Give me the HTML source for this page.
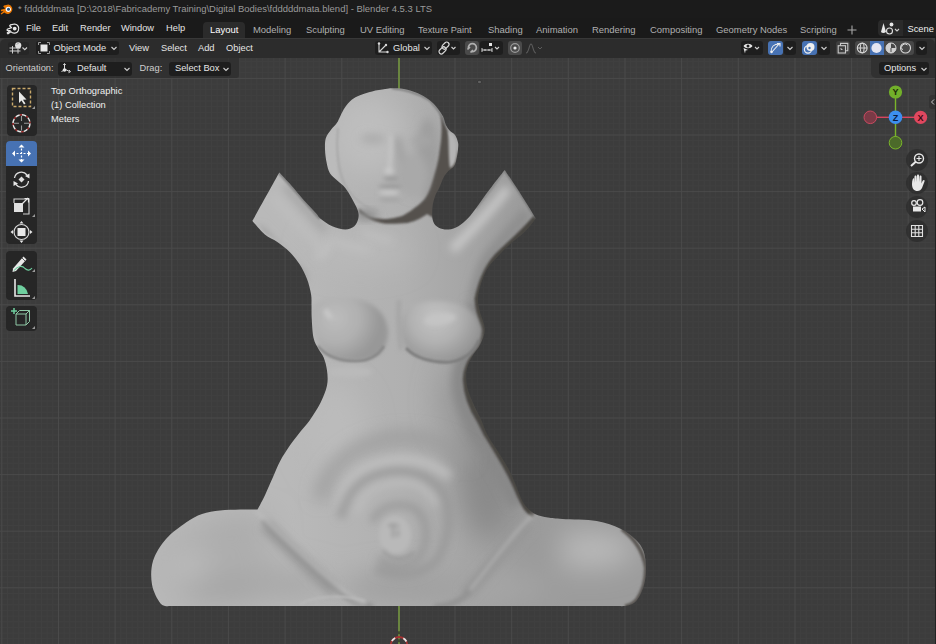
<!DOCTYPE html>
<html><head><meta charset="utf-8">
<style>
*{margin:0;padding:0;box-sizing:border-box}
html,body{width:936px;height:644px;overflow:hidden;background:#3d3d3d;font-family:"Liberation Sans",sans-serif;color:#e6e6e6}
.a{position:absolute;white-space:nowrap}
#title{left:0;top:0;width:936px;height:18px;background:#1b1b1b}
#menubar{left:0;top:18px;width:936px;height:20px;background:#1a1a1a}
.t{position:absolute;white-space:nowrap;font-size:9.3px;line-height:12px}
#hdr{left:0;top:38px;width:935px;height:20px;background:#2c2c2c;border-radius:6px 6px 0 0;border-top:1px solid #383838}
#tool{left:0;top:58px;width:238.5px;height:20px;background:rgba(46,46,46,0.75);border-radius:0 0 3px 0}
#tool2{left:871px;top:58px;width:64px;height:20px;background:rgba(46,46,46,0.75);border-radius:0 0 0 5px}
.dd{position:absolute;background:#1e1e1e;border-radius:3px}
.tb{position:absolute;background:#262626;border-radius:4px}
.nb{position:absolute;width:22px;height:22px;border-radius:11px;background:rgba(38,38,38,0.6)}
</style></head><body>
<svg class="a" style="left:0;top:0" width="936" height="644" viewBox="0 0 936 644">
  <defs>
    <mask id="msk" maskUnits="userSpaceOnUse" x="0" y="0" width="936" height="644"><path d="M392.0 88.3 C395.1 88.3 399.7 88.3 404.0 89.1 C408.3 89.9 413.7 91.5 417.9 93.3 C422.1 95.1 425.8 97.3 429.1 99.8 C432.4 102.3 435.2 105.4 437.5 108.2 C439.8 111.0 441.7 113.8 443.1 116.6 C444.5 119.4 444.8 122.7 445.9 125.0 C447.0 127.3 448.1 128.9 449.6 130.6 C451.2 132.3 453.8 133.2 455.2 135.2 C456.6 137.2 457.5 140.4 458.0 142.5 C458.5 144.6 458.3 145.5 458.1 148.0 C457.9 150.5 457.4 154.7 456.8 157.7 C456.2 160.7 455.7 163.7 454.3 165.9 C452.9 168.1 450.4 168.9 448.6 170.8 C446.8 172.7 445.2 174.6 443.7 177.3 C442.2 180.0 441.1 183.8 439.6 187.1 C438.1 190.4 436.0 193.4 434.8 196.9 C433.6 200.4 432.6 204.2 432.3 208.3 C432.0 212.4 432.0 218.1 433.1 221.3 C434.2 224.6 436.2 226.4 438.8 227.8 C441.4 229.2 445.3 229.8 448.6 229.5 C451.9 229.2 455.1 228.1 458.4 226.2 C461.7 224.3 465.3 221.0 468.2 218.0 C471.1 215.0 473.4 211.8 476.0 208.3 C478.6 204.8 481.3 200.7 484.0 197.0 C486.7 193.3 488.9 190.5 492.3 186.0 C495.8 181.5 504.7 170.0 504.7 170.0 C504.7 170.0 514.4 184.2 519.6 192.3 C524.8 200.4 535.8 218.4 535.8 218.4 C535.8 218.4 529.0 227.7 524.6 232.0 C520.2 236.3 514.2 240.3 509.7 244.5 C505.1 248.7 501.0 252.9 497.3 257.0 C493.6 261.1 490.0 264.5 487.3 269.0 C484.6 273.5 482.6 279.0 481.0 284.0 C479.4 289.0 478.2 294.5 478.0 299.0 C477.8 303.5 478.7 306.0 479.8 311.0 C480.9 316.0 484.7 323.4 484.8 329.0 C484.9 334.6 482.6 339.6 480.4 344.3 C478.2 349.0 474.0 352.8 471.7 357.4 C469.4 362.0 467.0 366.9 466.3 372.0 C465.6 377.1 466.1 382.3 467.4 387.8 C468.7 393.3 471.6 399.8 474.0 405.2 C476.4 410.6 479.3 415.6 481.5 420.4 C483.7 425.2 484.4 429.1 487.0 434.0 C489.6 438.9 493.5 444.3 497.0 450.0 C500.5 455.7 505.0 462.5 508.0 468.0 C511.0 473.5 512.8 477.8 515.0 483.0 C517.2 488.2 519.5 494.9 521.5 499.0 C523.5 503.1 524.6 504.9 527.0 507.5 C529.4 510.1 532.5 512.8 536.0 514.5 C539.5 516.2 543.6 516.8 548.0 517.5 C552.4 518.2 554.5 518.4 562.6 519.0 C570.7 519.6 587.1 519.4 596.7 521.0 C606.3 522.6 613.6 525.5 620.0 528.5 C626.4 531.5 631.1 535.2 635.0 539.0 C638.9 542.8 641.7 546.2 643.5 551.0 C645.3 555.8 645.9 562.3 646.0 568.0 C646.1 573.7 645.5 579.7 644.0 585.0 C642.5 590.3 639.7 596.6 637.0 600.0 C634.3 603.4 631.2 604.5 628.0 605.5 C624.8 606.5 618.0 606.0 618.0 606.0 C618.0 606.0 170.0 606.0 170.0 606.0 C170.0 606.0 163.5 607.0 160.5 603.4 C157.5 599.8 153.2 591.7 152.0 584.6 C150.8 577.5 150.7 568.6 153.0 561.0 C155.3 553.4 160.5 545.4 166.0 539.0 C171.5 532.6 180.0 526.7 186.0 522.5 C192.0 518.3 196.3 516.0 202.0 514.0 C207.7 512.0 213.7 511.3 220.0 510.6 C226.3 509.9 233.8 509.8 240.0 509.6 C246.2 509.4 257.5 509.5 257.5 509.5 C257.5 509.5 259.2 506.5 260.5 504.0 C261.8 501.5 263.3 499.0 265.3 494.6 C267.3 490.2 270.2 483.4 272.7 477.8 C275.2 472.2 277.4 466.3 280.2 461.0 C283.0 455.7 286.1 451.0 289.5 446.0 C292.9 441.0 297.3 435.5 300.7 431.2 C304.1 426.9 306.3 425.1 309.6 420.4 C312.9 415.7 317.5 408.8 320.4 403.0 C323.3 397.2 325.9 391.0 327.0 385.6 C328.1 380.2 327.6 375.1 327.0 370.4 C326.4 365.7 325.1 361.0 323.7 357.4 C322.2 353.8 320.0 352.0 318.3 348.7 C316.6 345.4 314.6 342.9 313.5 337.8 C312.4 332.7 312.0 323.5 311.7 318.0 C311.4 312.5 311.6 309.0 311.5 305.0 C311.4 301.0 311.8 298.3 311.0 294.0 C310.2 289.7 308.9 283.9 307.0 279.0 C305.1 274.1 302.5 268.8 299.6 264.3 C296.7 259.8 293.4 255.7 289.7 252.0 C286.0 248.3 281.4 244.9 277.3 242.0 C273.2 239.1 268.9 238.0 264.8 234.5 C260.7 231.0 252.4 220.9 252.4 220.9 C252.4 220.9 279.3 172.4 279.3 172.4 C279.3 172.4 285.5 178.8 289.7 183.6 C293.9 188.4 300.2 196.1 304.6 201.0 C309.0 205.9 313.3 210.2 316.0 213.2 C318.7 216.2 318.2 216.7 320.9 218.9 C323.6 221.1 328.2 224.4 332.3 226.2 C336.4 228.0 341.6 229.5 345.3 229.5 C349.0 229.5 352.1 228.1 354.3 226.2 C356.5 224.3 357.8 220.7 358.4 218.0 C358.9 215.3 358.7 213.2 357.6 209.9 C356.5 206.7 353.9 202.2 351.9 198.5 C349.8 194.8 347.8 190.9 345.3 187.9 C342.9 184.9 339.8 182.9 337.2 180.5 C334.6 178.1 331.7 176.2 329.9 173.2 C328.1 170.2 327.4 166.5 326.6 162.6 C325.8 158.7 325.1 153.7 325.0 149.6 C324.9 145.5 324.8 141.5 325.8 138.2 C326.8 134.9 329.4 132.1 331.2 129.6 C333.0 127.1 335.2 125.4 336.8 123.1 C338.4 120.8 339.1 118.3 340.5 115.7 C341.9 113.1 343.2 110.0 345.1 107.3 C347.0 104.6 349.2 101.8 351.7 99.8 C354.2 97.8 356.6 96.6 360.0 95.2 C363.4 93.8 367.9 92.4 372.1 91.4 C376.3 90.4 381.9 89.6 385.2 89.1 C388.5 88.6 388.9 88.3 392.0 88.3Z" fill="#fff"/></mask>
    <filter id="b1" x="-50%" y="-50%" width="200%" height="200%"><feGaussianBlur stdDeviation="1"/></filter>
    <filter id="b2" x="-50%" y="-50%" width="200%" height="200%"><feGaussianBlur stdDeviation="2"/></filter>
    <filter id="b4" x="-50%" y="-50%" width="200%" height="200%"><feGaussianBlur stdDeviation="4"/></filter>
    <filter id="b8" x="-50%" y="-50%" width="200%" height="200%"><feGaussianBlur stdDeviation="8"/></filter>
    <filter id="b14" x="-50%" y="-50%" width="200%" height="200%"><feGaussianBlur stdDeviation="14"/></filter>
  </defs>
  <rect width="936" height="644" fill="#3c3c3c"/>
  <g stroke="#4a4a4a" stroke-width="1">
<path d="M7.5 58V644 M13.2 58V644 M18.8 58V644 M24.5 58V644 M30.2 58V644 M35.8 58V644 M41.5 58V644 M47.2 58V644 M52.8 58V644 M64.2 58V644 M69.8 58V644 M75.5 58V644 M81.2 58V644 M86.8 58V644 M92.5 58V644 M98.2 58V644 M103.8 58V644 M109.5 58V644 M120.8 58V644 M126.5 58V644 M132.1 58V644 M137.8 58V644 M143.5 58V644 M149.1 58V644 M154.8 58V644 M160.5 58V644 M166.1 58V644 M177.5 58V644 M183.1 58V644 M188.8 58V644 M194.5 58V644 M200.1 58V644 M205.8 58V644 M211.5 58V644 M217.1 58V644 M222.8 58V644 M234.1 58V644 M239.8 58V644 M245.4 58V644 M251.1 58V644 M256.8 58V644 M262.4 58V644 M268.1 58V644 M273.8 58V644 M279.4 58V644 M290.8 58V644 M296.4 58V644 M302.1 58V644 M307.8 58V644 M313.4 58V644 M319.1 58V644 M324.8 58V644 M330.4 58V644 M336.1 58V644 M347.4 58V644 M353.1 58V644 M358.7 58V644 M364.4 58V644 M370.1 58V644 M375.7 58V644 M381.4 58V644 M387.1 58V644 M392.7 58V644 M404.1 58V644 M409.7 58V644 M415.4 58V644 M421.1 58V644 M426.7 58V644 M432.4 58V644 M438.1 58V644 M443.7 58V644 M449.4 58V644 M460.7 58V644 M466.4 58V644 M472.0 58V644 M477.7 58V644 M483.4 58V644 M489.0 58V644 M494.7 58V644 M500.4 58V644 M506.0 58V644 M517.4 58V644 M523.0 58V644 M528.7 58V644 M534.4 58V644 M540.0 58V644 M545.7 58V644 M551.4 58V644 M557.0 58V644 M562.7 58V644 M574.0 58V644 M579.7 58V644 M585.3 58V644 M591.0 58V644 M596.7 58V644 M602.3 58V644 M608.0 58V644 M613.7 58V644 M619.3 58V644 M630.7 58V644 M636.3 58V644 M642.0 58V644 M647.7 58V644 M653.3 58V644 M659.0 58V644 M664.7 58V644 M670.3 58V644 M676.0 58V644 M687.3 58V644 M693.0 58V644 M698.6 58V644 M704.3 58V644 M710.0 58V644 M715.6 58V644 M721.3 58V644 M727.0 58V644 M732.6 58V644 M744.0 58V644 M749.6 58V644 M755.3 58V644 M761.0 58V644 M766.6 58V644 M772.3 58V644 M778.0 58V644 M783.6 58V644 M789.3 58V644 M800.6 58V644 M806.3 58V644 M811.9 58V644 M817.6 58V644 M823.3 58V644 M828.9 58V644 M834.6 58V644 M840.3 58V644 M845.9 58V644 M857.3 58V644 M862.9 58V644 M868.6 58V644 M874.3 58V644 M879.9 58V644 M885.6 58V644 M891.3 58V644 M896.9 58V644 M902.6 58V644 M913.9 58V644 M919.6 58V644 M925.2 58V644 M930.9 58V644 M0 61.4H936 M0 67.1H936 M0 72.7H936 M0 84.1H936 M0 89.7H936 M0 95.4H936 M0 101.0H936 M0 106.7H936 M0 112.4H936 M0 118.0H936 M0 123.7H936 M0 129.3H936 M0 140.7H936 M0 146.3H936 M0 152.0H936 M0 157.6H936 M0 163.3H936 M0 169.0H936 M0 174.6H936 M0 180.3H936 M0 185.9H936 M0 197.3H936 M0 202.9H936 M0 208.6H936 M0 214.2H936 M0 219.9H936 M0 225.6H936 M0 231.2H936 M0 236.9H936 M0 242.5H936 M0 253.9H936 M0 259.5H936 M0 265.2H936 M0 270.8H936 M0 276.5H936 M0 282.2H936 M0 287.8H936 M0 293.5H936 M0 299.1H936 M0 310.5H936 M0 316.1H936 M0 321.8H936 M0 327.4H936 M0 333.1H936 M0 338.8H936 M0 344.4H936 M0 350.1H936 M0 355.7H936 M0 367.1H936 M0 372.7H936 M0 378.4H936 M0 384.0H936 M0 389.7H936 M0 395.4H936 M0 401.0H936 M0 406.7H936 M0 412.3H936 M0 423.7H936 M0 429.3H936 M0 435.0H936 M0 440.6H936 M0 446.3H936 M0 452.0H936 M0 457.6H936 M0 463.3H936 M0 468.9H936 M0 480.3H936 M0 485.9H936 M0 491.6H936 M0 497.2H936 M0 502.9H936 M0 508.6H936 M0 514.2H936 M0 519.9H936 M0 525.5H936 M0 536.9H936 M0 542.5H936 M0 548.2H936 M0 553.8H936 M0 559.5H936 M0 565.2H936 M0 570.8H936 M0 576.5H936 M0 582.1H936 M0 593.5H936 M0 599.1H936 M0 604.8H936 M0 610.4H936 M0 616.1H936 M0 621.8H936 M0 627.4H936 M0 633.1H936 M0 638.7H936" stroke="#404040" stroke-width="1" fill="none"/>
<line x1="1.8" y1="58" x2="1.8" y2="644"/>
<line x1="58.5" y1="58" x2="58.5" y2="644"/>
<line x1="115.1" y1="58" x2="115.1" y2="644"/>
<line x1="171.8" y1="58" x2="171.8" y2="644"/>
<line x1="228.4" y1="58" x2="228.4" y2="644"/>
<line x1="285.1" y1="58" x2="285.1" y2="644"/>
<line x1="341.8" y1="58" x2="341.8" y2="644"/>
<line x1="455.0" y1="58" x2="455.0" y2="644"/>
<line x1="511.7" y1="58" x2="511.7" y2="644"/>
<line x1="568.3" y1="58" x2="568.3" y2="644"/>
<line x1="625.0" y1="58" x2="625.0" y2="644"/>
<line x1="681.6" y1="58" x2="681.6" y2="644"/>
<line x1="738.3" y1="58" x2="738.3" y2="644"/>
<line x1="795.0" y1="58" x2="795.0" y2="644"/>
<line x1="851.6" y1="58" x2="851.6" y2="644"/>
<line x1="908.2" y1="58" x2="908.2" y2="644"/>
<line x1="0" y1="78.4" x2="936" y2="78.4"/>
<line x1="0" y1="135.0" x2="936" y2="135.0"/>
<line x1="0" y1="191.6" x2="936" y2="191.6"/>
<line x1="0" y1="248.2" x2="936" y2="248.2"/>
<line x1="0" y1="304.8" x2="936" y2="304.8"/>
<line x1="0" y1="361.4" x2="936" y2="361.4"/>
<line x1="0" y1="418.0" x2="936" y2="418.0"/>
<line x1="0" y1="474.6" x2="936" y2="474.6"/>
<line x1="0" y1="531.2" x2="936" y2="531.2"/>
<line x1="0" y1="587.8" x2="936" y2="587.8"/>
<line x1="0" y1="644.4" x2="936" y2="644.4"/>
  </g>
  <line x1="399" y1="58" x2="399" y2="644" stroke="#6a8540" stroke-width="2"/>
  <g mask="url(#msk)">
  <rect x="140" y="80" width="520" height="540" fill="#afafaf"/>
<defs>
  <linearGradient id="gbase" gradientUnits="userSpaceOnUse" x1="290" y1="0" x2="520" y2="0">
    <stop offset="0" stop-color="#b9b9b9"/>
    <stop offset="0.5" stop-color="#b0b0b0"/>
    <stop offset="1" stop-color="#9c9c9c"/>
  </linearGradient>
</defs>
<rect x="140" y="80" width="520" height="540" fill="url(#gbase)"/>
<!-- broad light/dark -->
<g filter="url(#b14)">
  <ellipse cx="368" cy="135" rx="38" ry="40" fill="#bebebe"/>
  <ellipse cx="215" cy="565" rx="60" ry="40" fill="#aeaeae"/>
  <ellipse cx="188" cy="568" rx="22" ry="18" fill="#bcbcbc"/>
  <ellipse cx="230" cy="590" rx="50" ry="14" fill="#a4a4a4"/>
  <ellipse cx="240" cy="525" rx="35" ry="10" fill="#aaaaaa"/>
  <ellipse cx="590" cy="550" rx="45" ry="18" fill="#bababa"/>
  <ellipse cx="545" cy="545" rx="18" ry="30" fill="#9a9a9a"/>
  <ellipse cx="360" cy="250" rx="50" ry="18" fill="#b9b9b9"/>
  <ellipse cx="335" cy="430" rx="30" ry="45" fill="#bbbbbb"/>
  <ellipse cx="488" cy="470" rx="30" ry="70" fill="#8a8a8a"/>
  <ellipse cx="455" cy="400" rx="15" ry="35" fill="#9a9a9a"/>
  <ellipse cx="405" cy="588" rx="65" ry="16" fill="#9f9f9f"/>
  <ellipse cx="290" cy="585" rx="40" ry="16" fill="#a8a8a8"/>
  <ellipse cx="505" cy="588" rx="40" ry="14" fill="#a6a6a6"/>
</g>
<!-- head right -->
<g filter="url(#b4)">
  <ellipse cx="428" cy="160" rx="11" ry="42" fill="#9e9e9e"/>
</g>
<g filter="url(#b1)">
  <path d="M438 108 C443 118 442 135 439.7 150 C438.5 160 437.6 164 433.4 178 C431 186 428 196 423 200.8 C419 205 416 207 412.5 209.4 C406 214 402 216.5 398 217 C392 218.5 388 219 383.7 219 C378 218.5 373 217.5 369.2 216 C365 213 361 210 358.7 208.5 L359.6 213.3 C364 216 369 219 374 221 C380 223 385 223.8 390.4 223.8 C397 223.8 402 223.3 407.7 222.9 C412 222 416 220.5 419 219 C423 217 425 215.5 427 214 L440 222 L460 160 Z" fill="#55514d"/>
</g>
<g filter="url(#b4)">
  <ellipse cx="366" cy="215" rx="12" ry="5" fill="#8a8a8a"/>
</g>
<g filter="url(#b4)" fill="none">
  <path d="M318 258 C322 252 326 248 330 244" stroke="#c4c4c4" stroke-width="6"/>
  <path d="M362 232 C372 236 382 239 392 240" stroke="#c4c4c4" stroke-width="4"/>
</g>
<g filter="url(#b1)" fill="none">
  <path d="M392 88.3 C404 89.1 417.9 93.3 429.1 99.8 C437.5 108.2 443.1 116.6 445.9 125" stroke="#6c6c6c" stroke-width="1.6"/>
</g>
<g filter="url(#b1)">
  <path d="M448 131 C455 134 458 145 457 155 C456 162 454 166 450 168 C448.5 160 449 145 448 131 Z" fill="#b4b4b4"/>
  <path d="M336 128 C329 133 325.5 145 326 158 C327 168 330 175 338 180 C337 165 335 145 336 128 Z" fill="#bbbbbb"/>
</g>
<g filter="url(#b1)" fill="none">
  <path d="M338 128 C336 150 338 170 345 185 C352 198 365 208 378 211" stroke="#a4a4a4" stroke-width="1.5"/>
</g>
<!-- face features -->
<g filter="url(#b4)">
  <ellipse cx="373" cy="139" rx="13" ry="5" fill="#acacac"/>
  <ellipse cx="422" cy="141" rx="12" ry="5" fill="#a6a6a6"/>
  <path d="M397 137 C401 150 402 163 399 176" stroke="#9c9c9c" stroke-width="7" fill="none"/>
  <ellipse cx="412" cy="175" rx="16" ry="22" fill="#a9a9a9"/>
</g>
<g filter="url(#b2)">
  <path d="M391 135 C391 150 390 162 389 170" stroke="#c6c6c6" stroke-width="3.5" fill="none"/>
  <ellipse cx="389" cy="171" rx="4.5" ry="3.5" fill="#c8c8c8"/>
  <ellipse cx="391" cy="178.5" rx="8" ry="2.2" fill="#979797"/>
  <ellipse cx="390" cy="186.5" rx="12" ry="1.8" fill="#939393"/>
  <ellipse cx="389" cy="192.5" rx="10" ry="2.6" fill="#c8c8c8"/>
  <ellipse cx="390" cy="199.5" rx="11" ry="2.3" fill="#a4a4a4"/>
</g>
<!-- left arm -->
<g filter="url(#b4)" fill="none">
  <path d="M272 196 L325 252" stroke="#bdbdbd" stroke-width="9"/>
  <path d="M285 186 L325 230" stroke="#a2a2a2" stroke-width="6"/>
  <path d="M258 229 L305 280" stroke="#9a9a9a" stroke-width="8"/>
</g>
<g filter="url(#b1)" fill="none">
  <path d="M279.3 172.4 L304.6 201 L320 218.4" stroke="#7c7c7c" stroke-width="3"/>
  <path d="M252.4 220.9 L264.8 234.5 L277.3 242 L289.7 252 L299.6 264.3" stroke="#b8b8b8" stroke-width="3"/>
</g>
<!-- right arm -->
<g filter="url(#b4)" fill="none">
  <path d="M528 212 C514 228 500 242 489 257 C482 267 478 280 474 300" stroke="#8e8e8e" stroke-width="12"/>
  <path d="M452 250 C470 232 490 212 508 188" stroke="#c8c8c8" stroke-width="9"/>
  <path d="M330 238 C340 245 355 248 370 250" stroke="#c2c2c2" stroke-width="4"/>
</g>
<g filter="url(#b4)" fill="none">
  <path d="M474 300 C478 320 480 335 470 350 C462 362 458 372 460 390 C462 405 470 420 480 436 C492 455 505 480 518 505" stroke="#888888" stroke-width="16"/>
</g>
<g filter="url(#b1)" fill="none">
  <path d="M537 217 C525 232 508 246 497 257 C487 268 481 284 478 299 C479 315 484 325 484.8 329 C484 338 481 344 478 350 C472 360 466 368 466.3 380 C467 395 472 408 480 420 C484 428 486 432 487 434 C497 450 508 468 515 483 C519 492 522 500 527 508 C530 512 532 513 534 514" stroke="#4a4643" stroke-width="7"/>
  <path d="M504.7 170 L519.6 192.3 L535.8 218.4" stroke="#6a6a6a" stroke-width="1.8"/>
  <path d="M504.7 170 L492.3 187.3 L476 208.3" stroke="#808080" stroke-width="1.8"/>
</g>
<!-- chest -->
<defs>
  <radialGradient id="gbl" gradientUnits="userSpaceOnUse" cx="335" cy="318" r="45">
    <stop offset="0" stop-color="#bcbcbc"/>
    <stop offset="0.55" stop-color="#b0b0b0"/>
    <stop offset="1" stop-color="#989898"/>
  </radialGradient>
  <radialGradient id="gbr" gradientUnits="userSpaceOnUse" cx="435" cy="318" r="48">
    <stop offset="0" stop-color="#c2c2c2"/>
    <stop offset="0.5" stop-color="#b2b2b2"/>
    <stop offset="1" stop-color="#929292"/>
  </radialGradient>
</defs>
<g filter="url(#b2)">
  <path d="M311.6 309.8 C314 300 330 296 350 298 C372 300 386 312 388 330 C389 345 380 356 371 358 C358 362 340 362 330 356 C318 348 310 330 311.6 309.8 Z" fill="url(#gbl)"/>
  <path d="M401.6 323 C402 308 418 300 438 301 C462 302 478 312 481 329.6 C483 345 472 358 452 361 C432 363 412 356 405 345 C402 338 401 330 401.6 323 Z" fill="url(#gbr)"/>
</g>
<g filter="url(#b1)" fill="none">
  <path d="M318 346 C326 356 340 361 355 361 C368 361 378 356 384 346" stroke="#858585" stroke-width="2.5"/>
  <path d="M406 348 C415 358 432 363 450 362 C465 360 474 352 479 340" stroke="#7c7c7c" stroke-width="3"/>
</g>
<g filter="url(#b2)">
  <path d="M399 300 C398 318 399 335 401 350" stroke="#a0a0a0" stroke-width="3" fill="none"/>
  <ellipse cx="328" cy="314" rx="6" ry="2.5" fill="#cacaca" transform="rotate(55 328 314)"/>
  <ellipse cx="440" cy="319" rx="16" ry="6" fill="#c4c4c4" transform="rotate(-8 440 319)"/>
  <ellipse cx="350" cy="372" rx="22" ry="6" fill="#bababa"/>
</g>
<!-- belly spiral -->
<g filter="url(#b8)" fill="none">
  <path d="M320 500 C326 468 350 446 390 438 C420 434 450 442 470 462" stroke="#9a9a9a" stroke-width="11"/>
</g>
<g filter="url(#b4)" fill="none">
  <path d="M340 508 C342 482 360 465 395 460 C418 458 436 465 450 477" stroke="#c0c0c0" stroke-width="8"/>
  <path d="M341 518 C345 492 360 475 390 471 C415 469 432 478 443 493 C452 510 450 540 437 560 C422 576 396 579 375 569" stroke="#979797" stroke-width="7"/>
  <path d="M357 512 C362 492 378 483 402 482 C420 482 430 491 436 506" stroke="#bebebe" stroke-width="6"/>
  <path d="M372 522 C378 507 395 502 412 507 C428 515 430 540 420 556 C410 568 390 568 378 558" stroke="#939393" stroke-width="5"/>
</g>
<g filter="url(#b2)">
  <ellipse cx="395" cy="535" rx="16" ry="19" fill="#b9b9b9"/>
  <path d="M383 550 C390 560 405 562 414 552" stroke="#969696" stroke-width="3" fill="none"/>
  <path d="M388 526 C392 524 396 524 399 527 M393 526 V538 M398 530 V537" stroke="#909090" stroke-width="2" fill="none"/>
</g>
<!-- leg creases -->
<g filter="url(#b4)" fill="none">
  <path d="M265 525 C285 545 310 570 335 592" stroke="#979797" stroke-width="12"/>
  <path d="M528 525 C510 545 488 570 465 595" stroke="#979797" stroke-width="12"/>
</g>
<g filter="url(#b2)" fill="none">
  <path d="M263 520 C286 542 316 572 341 592 C351 601 361 605 373 607" stroke="#939393" stroke-width="6"/>
  <path d="M528 521 C509 537 484 572 464 597 C454 604 444 607 434 607" stroke="#939393" stroke-width="6"/>
  <path d="M256 511 C279 533 309 563 334 583 C344 593 354 600 366 604" stroke="#bdbdbd" stroke-width="2.5"/>
  <path d="M534 514 C515 530 490 565 470 590" stroke="#b6b6b6" stroke-width="2.5"/>
</g>
<g filter="url(#b1)" fill="none">
  <path d="M300 604 C315 596 345 594 365 601" stroke="#bababa" stroke-width="2"/>
  <path d="M622 529 C635 539 643.5 551 646 568 C646 580 644 590 637 600 C633 604 630 606 625 606.5" stroke="#5a5652" stroke-width="4"/>
</g>

  </g>
  <ellipse cx="479.5" cy="82" rx="2.2" ry="1.6" fill="#606060" stroke="#333" stroke-width="0.8"/>
  <!-- 3d cursor -->
  <g transform="translate(399,645.3)">
    <circle r="8.3" fill="none" stroke="#a83232" stroke-width="1.8"/>
    <circle r="8.3" fill="none" stroke="#e8e8e8" stroke-width="1.8" stroke-dasharray="4.5 8.54" stroke-dashoffset="8.77"/>
    <path d="M0 -14 V-11 M0 -6 V-3" stroke="#222" stroke-width="1.2"/>
  </g>
</svg>

<div id="title" class="a"></div>
<div id="menubar" class="a"></div>
<div id="hdr" class="a"></div>
<div id="tool" class="a"></div>
<div id="tool2" class="a"></div>

<!-- title bar -->
<svg class="a" style="left:0;top:3px" width="15" height="13" viewBox="0 0 15 13">
  <path d="M8.3 1.6 A4.7 4.7 0 1 1 4.3 9.6 L1.4 11.6 L0.6 10.6 L3.6 8.2 L0.9 8.2 L0.9 6.8 L5.4 5.4 L3.2 3.6 L4 2.6 Z" fill="#ea7600"/>
  <circle cx="8.3" cy="6.3" r="2.6" fill="#ffffff"/>
  <circle cx="8.5" cy="6.3" r="1.5" fill="#265787"/>
</svg>
<div class="t" style="left:18px;top:3px;font-size:9.47px;color:#9a9a9a">* fdddddmata [D:\2018\Fabricademy Training\Digital Bodies\fdddddmata.blend] - Blender 4.5.3 LTS</div>

<!-- menubar -->
<svg class="a" style="left:5px;top:22px" width="16" height="14" viewBox="0 0 16 14">
  <path d="M9.7 2 A4.6 4.6 0 1 1 5.8 9.7 L3 11.8 L2.2 10.9 L5.1 8.5 L2.2 8.5 L2.2 7.2 L6.6 5.6 L4.6 3.8 L5.4 2.9 Z" fill="none" stroke="#e8e8e8" stroke-width="1.2" stroke-linejoin="round"/>
  <circle cx="9.7" cy="6.6" r="1.9" fill="#e8e8e8"/>
</svg>
<div class="t" style="left:26px;top:22px">File</div>
<div class="t" style="left:52px;top:22px">Edit</div>
<div class="t" style="left:80px;top:22px">Render</div>
<div class="t" style="left:121px;top:22px">Window</div>
<div class="t" style="left:166px;top:22px">Help</div>

<div class="a" style="left:203px;top:22px;width:42px;height:16px;background:#2b2b2b;border-radius:4px 4px 0 0"></div>
<div class="t" style="left:210px;top:24px;font-size:9.45px;color:#ffffff">Layout</div>
<div class="t" style="left:253px;top:24px;font-size:9.45px;color:#b0b0b0">Modeling</div>
<div class="t" style="left:306px;top:24px;font-size:9.45px;color:#b0b0b0">Sculpting</div>
<div class="t" style="left:360px;top:24px;font-size:9.45px;color:#b0b0b0">UV Editing</div>
<div class="t" style="left:418px;top:24px;font-size:9.2px;color:#b0b0b0">Texture Paint</div>
<div class="t" style="left:488px;top:24px;font-size:9.45px;color:#b0b0b0">Shading</div>
<div class="t" style="left:536px;top:24px;font-size:9.45px;color:#b0b0b0">Animation</div>
<div class="t" style="left:592px;top:24px;font-size:9.45px;color:#b0b0b0">Rendering</div>
<div class="t" style="left:650px;top:24px;font-size:9.45px;color:#b0b0b0">Compositing</div>
<div class="t" style="left:716px;top:24px;font-size:9.45px;color:#b0b0b0">Geometry Nodes</div>
<div class="t" style="left:800px;top:24px;font-size:9.45px;color:#b0b0b0">Scripting</div>
<svg class="a" style="left:847px;top:25px" width="10" height="10" viewBox="0 0 10 10"><path d="M5 0.5 V9.5 M0.5 5 H9.5" stroke="#a8a8a8" stroke-width="1.1"/></svg>

<!-- scene selector -->
<div class="dd" style="left:878px;top:20.2px;width:25px;height:15.8px;background:#2a2a2a;border-radius:4px 0 0 4px"></div>
<svg class="a" style="left:878px;top:20px" width="25" height="16" viewBox="0 0 25 16">
  <path d="M5.5 3 L3 12 C4 13 6 13.5 8 12 Z" fill="#e8e8e8"/>
  <circle cx="11.5" cy="11" r="3" fill="#2a2a2a" stroke="#e0e0e0" stroke-width="1.1"/>
  <circle cx="13.5" cy="4.5" r="1.9" fill="#e8e8e8"/>
  <path d="M17 9 L19 11 L21 9" fill="none" stroke="#d0d0d0" stroke-width="1.1"/>
</svg>
<div class="dd" style="left:903px;top:20.2px;width:40px;height:15.8px;background:#202020;border-radius:0"></div>
<div class="t" style="left:907.5px;top:22.5px;color:#f0f0f0">Scene</div>

<!-- header row -->
<div class="dd" style="left:8.3px;top:41.5px;width:20.5px;height:13.2px;background:#262626"></div>
<svg class="a" style="left:0;top:38px" width="30" height="20" viewBox="0 38 30 20">
  <path d="M9.5 48 H20.5 M9.5 51 H20.5 M12.5 46 V53.5 M18 49 V53.5" stroke="#d0d0d0" stroke-width="1"/>
  <circle cx="18.2" cy="45.4" r="3.1" fill="#e0e0e0"/>
  <path d="M16.8 44.6 A1.6 1.6 0 0 1 18.6 43.6" stroke="#888" stroke-width="0.8" fill="none"/>
  <path d="M22.5 47.5 L24.8 49.7 L27 47.5" fill="none" stroke="#d0d0d0" stroke-width="1.1"/>
</svg>
<div class="dd" style="left:36px;top:41px;width:83px;height:14px"></div>
<svg class="a" style="left:37px;top:41px" width="14" height="14" viewBox="0 0 14 14">
  <rect x="3.5" y="3.5" width="7" height="7" fill="#e8e8e8"/>
  <path d="M1.5 4 V1.5 H4 M10 1.5 H12.5 V4 M12.5 10 V12.5 H10 M4 12.5 H1.5 V10" fill="none" stroke="#9a9a9a" stroke-width="1"/>
</svg>
<div class="t" style="left:53.5px;top:42px">Object Mode</div>
<svg class="a" style="left:110px;top:44px" width="8" height="8" viewBox="0 0 8 8"><path d="M1.5 3 L4 5.5 L6.5 3" fill="none" stroke="#d0d0d0" stroke-width="1.1"/></svg>

<div class="t" style="left:129px;top:42px">View</div>
<div class="t" style="left:161px;top:42px">Select</div>
<div class="t" style="left:198px;top:42px">Add</div>
<div class="t" style="left:226px;top:42px">Object</div>

<div class="dd" style="left:375px;top:41px;width:57px;height:14px"></div>
<svg class="a" style="left:376px;top:41px" width="14" height="14" viewBox="0 0 14 14">
  <path d="M3 2 V11 H12 M3 11 L10 4" fill="none" stroke="#d8d8d8" stroke-width="1.1"/>
  <circle cx="3" cy="2.5" r="1.2" fill="#d8d8d8"/><circle cx="11.5" cy="11" r="1.2" fill="#d8d8d8"/><circle cx="10" cy="4" r="1.2" fill="#d8d8d8"/>
</svg>
<div class="t" style="left:393px;top:42px">Global</div>
<svg class="a" style="left:423px;top:44px" width="8" height="8" viewBox="0 0 8 8"><path d="M1.5 3 L4 5.5 L6.5 3" fill="none" stroke="#d0d0d0" stroke-width="1.1"/></svg>

<div class="dd" style="left:437px;top:41px;width:23px;height:14px"></div>
<svg class="a" style="left:438px;top:41px" width="22" height="14" viewBox="0 0 22 14">
  <rect x="5.2" y="0.6" width="4.6" height="8" rx="2.3" transform="rotate(45 7.5 4.6)" fill="none" stroke="#d8d8d8" stroke-width="1.2"/>
  <rect x="2.2" y="5.4" width="4.6" height="8" rx="2.3" transform="rotate(45 4.5 9.4)" fill="none" stroke="#d8d8d8" stroke-width="1.2"/>
  <path d="M13.5 6 L15.5 8 L17.5 6" fill="none" stroke="#d0d0d0" stroke-width="1.1"/>
</svg>
<div class="dd" style="left:465px;top:41px;width:14px;height:14px;background:#4a4a4a"></div>
<svg class="a" style="left:465px;top:41px" width="14" height="14" viewBox="0 0 14 14">
  <path d="M2.5 8.5 L5 6 M5.5 11.5 L8 9" stroke="#b0b0b0" stroke-width="1.6"/>
  <path d="M3.5 7.5 A4 4 0 1 1 6.5 10.5" fill="none" stroke="#b0b0b0" stroke-width="1.7"/>
</svg>
<div class="dd" style="left:480px;top:41px;width:23px;height:14px"></div>
<svg class="a" style="left:480px;top:41px" width="23" height="14" viewBox="0 0 23 14">
  <path d="M2 9 H12 M2 7 V11 M12 7 V11 M5 8 V10 M9 8 V10" stroke="#d0d0d0" stroke-width="1"/>
  <rect x="9" y="2" width="3" height="3" fill="#e8e8e8"/>
  <path d="M15 6 L17 8 L19 6" fill="none" stroke="#d0d0d0" stroke-width="1.1"/>
</svg>
<div class="dd" style="left:508px;top:41px;width:14px;height:14px;background:#4a4a4a"></div>
<svg class="a" style="left:508px;top:41px" width="14" height="14" viewBox="0 0 14 14">
  <circle cx="7" cy="7" r="4.3" fill="none" stroke="#9a9a9a" stroke-width="1.2"/>
  <circle cx="7" cy="7" r="1.6" fill="#e8e8e8"/>
</svg>
<svg class="a" style="left:525px;top:41px" width="20" height="14" viewBox="0 0 20 14">
  <path d="M1 12 C4 12 4 3 6 3 C8 3 8 12 11 12" fill="none" stroke="#5c5c5c" stroke-width="1.1"/>
  <path d="M13 6 L15 8 L17 6" fill="none" stroke="#5c5c5c" stroke-width="1"/>
</svg>

<!-- right header -->
<div class="dd" style="left:741px;top:41px;width:22px;height:14px"></div>
<svg class="a" style="left:741px;top:41px" width="22" height="14" viewBox="0 0 22 14">
  <path d="M2.5 5 C4.5 2 9.5 2 11.5 5 C9.5 8 4.5 8 2.5 5 Z" fill="#e8e8e8"/>
  <circle cx="7" cy="5" r="1.5" fill="#1e1e1e"/>
  <path d="M2.5 7 L7 9 L4.5 9.5 L4 12.5 Z" fill="#e8e8e8"/>
  <path d="M14 6 L16 8 L18 6" fill="none" stroke="#d0d0d0" stroke-width="1.1"/>
</svg>
<div class="dd" style="left:768px;top:41px;width:14.5px;height:14px;background:#4772b3"></div>
<svg class="a" style="left:768px;top:41px" width="15" height="14" viewBox="0 0 15 14">
  <path d="M3 11 C3 6 6 3 11 3" fill="none" stroke="#f0f0f0" stroke-width="1.1"/>
  <path d="M3.5 11.5 L11.5 2.5 M9 2.5 H12 V5.5" fill="none" stroke="#f0f0f0" stroke-width="1.1"/>
  <circle cx="3.5" cy="11" r="1.2" fill="#f0f0f0"/>
</svg>
<div class="dd" style="left:784px;top:41px;width:12px;height:14px"></div>
<svg class="a" style="left:786px;top:44px" width="8" height="8" viewBox="0 0 8 8"><path d="M1.5 3 L4 5.5 L6.5 3" fill="none" stroke="#d0d0d0" stroke-width="1.1"/></svg>
<div class="dd" style="left:802px;top:41px;width:14.5px;height:14px;background:#4772b3"></div>
<svg class="a" style="left:802px;top:41px" width="15" height="14" viewBox="0 0 15 14">
  <circle cx="8.5" cy="6" r="4" fill="#f0f0f0"/>
  <circle cx="6" cy="8.5" r="3.6" fill="none" stroke="#f0f0f0" stroke-width="1.2"/>
  <circle cx="7.5" cy="7" r="1.2" fill="#4772b3"/>
</svg>
<div class="dd" style="left:818px;top:41px;width:12px;height:14px"></div>
<svg class="a" style="left:820px;top:44px" width="8" height="8" viewBox="0 0 8 8"><path d="M1.5 3 L4 5.5 L6.5 3" fill="none" stroke="#d0d0d0" stroke-width="1.1"/></svg>
<div class="dd" style="left:835.5px;top:41px;width:14.5px;height:14px;background:#3e3e3e"></div>
<svg class="a" style="left:836px;top:41px" width="14" height="14" viewBox="0 0 14 14">
  <rect x="2.2" y="4.7" width="7.3" height="7.3" fill="none" stroke="#c8c8c8" stroke-width="1.1"/>
  <path d="M4.5 4.7 V2.4 H11.8 V9.7 H9.5" fill="none" stroke="#c8c8c8" stroke-width="1.1"/>
  <path d="M5 7 V8.5 H6.5" fill="none" stroke="#c8c8c8" stroke-width="0.9"/>
</svg>
<div class="dd" style="left:855px;top:41px;width:59px;height:14px;background:#474747"></div>
<div class="dd" style="left:869.7px;top:41px;width:14px;height:14px;background:#4772b3;border-radius:0"></div>
<svg class="a" style="left:855px;top:41px" width="59" height="14" viewBox="0 0 59 14">
  <circle cx="7.2" cy="7" r="4.9" fill="none" stroke="#d8d8d8" stroke-width="1.1"/>
  <path d="M2.3 7 H12.1" stroke="#d8d8d8" stroke-width="1"/>
  <ellipse cx="7.2" cy="7" rx="2" ry="4.9" fill="none" stroke="#d8d8d8" stroke-width="1"/>
  <circle cx="21.5" cy="7" r="5.1" fill="#e4e6f2"/>
  <circle cx="36" cy="7" r="5" fill="#d0d0d0"/>
  <path d="M36 7 V2 A5 5 0 0 1 41 7 Z" fill="#474747"/>
  <path d="M36 7 V11 " stroke="#3a3a3a" stroke-width="0.9"/>
  <circle cx="36" cy="7" r="5" fill="none" stroke="#d8d8d8" stroke-width="1"/>
  <circle cx="50.5" cy="7" r="5" fill="none" stroke="#d8d8d8" stroke-width="1.1"/>
  <path d="M47.5 9 A3.5 3.5 0 0 1 52.5 4" fill="none" stroke="#d8d8d8" stroke-width="1"/>
</svg>
<div class="dd" style="left:916px;top:41px;width:11px;height:14px"></div>
<svg class="a" style="left:917.5px;top:44px" width="8" height="8" viewBox="0 0 8 8"><path d="M1.5 3 L4 5.5 L6.5 3" fill="none" stroke="#d0d0d0" stroke-width="1.1"/></svg>

<!-- tool settings row -->
<div class="t" style="left:5.5px;top:62px;color:#cfcfcf">Orientation:</div>
<div class="dd" style="left:58px;top:61.5px;width:74px;height:14px"></div>
<svg class="a" style="left:59px;top:61.5px" width="14" height="14" viewBox="0 0 14 14">
  <path d="M5.5 2 V7 L10.5 9.5 M5.5 7 L2.5 10" fill="none" stroke="#d8d8d8" stroke-width="1"/>
  <circle cx="5.5" cy="8" r="1.8" fill="#e8e8e8"/>
  <path d="M4.3 3 L5.5 1.5 L6.7 3 M10 8 L11.5 9.7 L9.5 10.7" fill="none" stroke="#d8d8d8" stroke-width="1"/>
</svg>
<div class="t" style="left:77px;top:62px">Default</div>
<svg class="a" style="left:123px;top:64.5px" width="8" height="8" viewBox="0 0 8 8"><path d="M1.5 3 L4 5.5 L6.5 3" fill="none" stroke="#d0d0d0" stroke-width="1.1"/></svg>
<div class="t" style="left:139.5px;top:62px;color:#cfcfcf">Drag:</div>
<div class="dd" style="left:169px;top:61.5px;width:62px;height:14px"></div>
<div class="t" style="left:175px;top:62px">Select Box</div>
<svg class="a" style="left:222px;top:64.5px" width="8" height="8" viewBox="0 0 8 8"><path d="M1.5 3 L4 5.5 L6.5 3" fill="none" stroke="#d0d0d0" stroke-width="1.1"/></svg>
<div class="dd" style="left:878.5px;top:61.5px;width:50px;height:13px"></div>
<div class="t" style="left:884px;top:62px">Options</div>
<svg class="a" style="left:920px;top:64.5px" width="8" height="8" viewBox="0 0 8 8"><path d="M1.5 3 L4 5.5 L6.5 3" fill="none" stroke="#d0d0d0" stroke-width="1.1"/></svg>

<!-- viewport text -->
<div class="t" style="left:51px;top:85px;color:#f0f0f0">Top Orthographic</div>
<div class="t" style="left:51px;top:99px;color:#f0f0f0">(1) Collection</div>
<div class="t" style="left:51px;top:113px;color:#f0f0f0">Meters</div>

<!-- toolbar -->
<div class="tb" style="left:7px;top:85px;width:30px;height:51px"></div>
<div class="tb" style="left:6px;top:141px;width:31px;height:103px"></div>
<div class="a" style="left:6px;top:141px;width:31px;height:25px;background:#4772b3;border-radius:4px 4px 0 0"></div>
<div class="tb" style="left:6px;top:251px;width:31px;height:49px"></div>
<div class="tb" style="left:6px;top:306px;width:31px;height:25px"></div>
<svg class="a" style="left:0;top:80px" width="50" height="260" viewBox="0 80 50 260">
  <!-- select box -->
  <rect x="12.5" y="88.5" width="18" height="18" fill="none" stroke="#c9a96b" stroke-width="1.4" stroke-dasharray="3 2"/>
  <path d="M19 91.5 L19 103 L21.5 100.5 L24 104.5 L25.5 103.5 L23 99.8 L26.5 99.5 Z" fill="#e8e8e8"/>
  <path d="M35 106 L35 109 L32 109 Z" fill="#9a9a9a"/>
  <!-- cursor -->
  <circle cx="21.5" cy="123.3" r="8.5" fill="none" stroke="#e8e8e8" stroke-width="1.4" stroke-dasharray="4.5 2.2"/>
  <circle cx="21.5" cy="123.3" r="8.5" fill="none" stroke="#b03030" stroke-width="1.4" stroke-dasharray="2.2 4.5" stroke-dashoffset="-4.5"/>
  <path d="M21.5 116 V121 M21.5 125.5 V130.5 M14 123.3 H19 M24 123.3 H29" stroke="#9a9a9a" stroke-width="1.1"/>
  <!-- move -->
  <path d="M21.5 145 V162 M13 153.5 H30" stroke="#ffffff" stroke-width="1.2" stroke-dasharray="2 1.5"/>
  <path d="M18.5 147.5 L21.5 144.5 L24.5 147.5 Z M18.5 159.5 L21.5 162.5 L24.5 159.5 Z M15 150.5 L12 153.5 L15 156.5 Z M28 150.5 L31 153.5 L28 156.5 Z" fill="#ffffff"/>
  <!-- rotate -->
  <path d="M14.5 178 A7 7 0 0 1 27 175 M28.5 181 A7 7 0 0 1 16 184.5" fill="none" stroke="#e0e0e0" stroke-width="1.3"/>
  <path d="M25 176 L29.5 173.5 L29.5 178.5 Z M18 183.5 L13.5 186 L13.5 181 Z" fill="#e8e8e8"/>
  <path d="M21.5 176.5 L24.5 179.5 L21.5 182.5 L18.5 179.5 Z" fill="#e0e0e0"/>
  <!-- scale -->
  <rect x="14" y="203" width="9" height="9" fill="#e0e0e0"/>
  <path d="M14 203 V199 H29 V214 H23" fill="none" stroke="#d0d0d0" stroke-width="1.1"/>
  <path d="M20 206 L28 198 M24.5 198.5 H28.5 V202.5" fill="none" stroke="#e8e8e8" stroke-width="1.2"/>
  <path d="M35 214 L35 217 L32 217 Z" fill="#9a9a9a"/>
  <!-- transform -->
  <circle cx="21.5" cy="232" r="7.5" fill="none" stroke="#d8d8d8" stroke-width="1.2"/>
  <rect x="17.5" y="228" width="8" height="8" fill="#e8e8e8"/>
  <path d="M19.5 223.5 L21.5 221 L23.5 223.5 Z M19.5 240.5 L21.5 243 L23.5 240.5 Z M13 230 L10.5 232 L13 234 Z M30 230 L32.5 232 L30 234 Z" fill="#e8e8e8"/>
  <!-- annotate -->
  <path d="M13 268.5 L23.5 256.5 L26.5 259.5 L16 271 L12.5 272 Z" fill="#e8e8e8"/>
  <path d="M22 258 L25 261" stroke="#333" stroke-width="0.8"/>
  <path d="M14 270.5 C18 266 22 265 25 268.5 C27.5 271 30 270.5 32 268" fill="none" stroke="#6fcf9f" stroke-width="1.1"/>
  <path d="M35 269 L35 272 L32 272 Z" fill="#9a9a9a"/>
  <!-- measure -->
  <path d="M15 279 V296 H30" fill="none" stroke="#e8e8e8" stroke-width="1.6"/>
  <path d="M17.5 285 A10 10 0 0 1 28 294 L17.5 294 Z" fill="#6fcf9f"/>
  <path d="M35 296 L35 299 L32 299 Z" fill="#9a9a9a"/>
  <!-- add cube -->
  <path d="M16 314 H26 V325 H16 Z M16 314 L19.5 310.5 H29.5 L26 314 M29.5 310.5 V321.5 L26 325" fill="none" stroke="#8fc9a6" stroke-width="1"/>
  <path d="M11 311 H17 M14 308 V314" stroke="#6fcf9f" stroke-width="1.5"/>
  <path d="M35 326 L35 329 L32 329 Z" fill="#9a9a9a"/>
</svg>

<!-- gizmo -->
<svg class="a" style="left:856px;top:80px" width="80" height="80" viewBox="856 80 80 80">
  <line x1="895.5" y1="117.3" x2="920.6" y2="117.3" stroke="#d9455f" stroke-width="1.4"/>
  <line x1="895.5" y1="117.3" x2="870.3" y2="117.3" stroke="#d9455f" stroke-width="1.4"/>
  <line x1="895.5" y1="117.3" x2="895.5" y2="92" stroke="#7ab52a" stroke-width="1.4"/>
  <line x1="895.5" y1="117.3" x2="895.5" y2="142.7" stroke="#7ab52a" stroke-width="1.4"/>
  <circle cx="870.3" cy="117.3" r="6.3" fill="#7a3a46" stroke="#c84a60" stroke-width="1"/>
  <circle cx="895.5" cy="142.7" r="6.3" fill="#4c6a2a" stroke="#7ab52a" stroke-width="1"/>
  <circle cx="920.6" cy="117.3" r="6.6" fill="#e0475f"/>
  <circle cx="895.5" cy="92" r="6.6" fill="#72b02a"/>
  <circle cx="895.5" cy="117.3" r="6.8" fill="#3c8ff0"/>
  <text x="920.6" y="120.5" font-size="9" text-anchor="middle" fill="#3a0a12" font-family="Liberation Sans" font-weight="bold">X</text>
  <text x="895.5" y="95.2" font-size="9" text-anchor="middle" fill="#1a2a08" font-family="Liberation Sans" font-weight="bold">Y</text>
  <text x="895.5" y="120.5" font-size="9" text-anchor="middle" fill="#0a1a40" font-family="Liberation Sans" font-weight="bold">Z</text>
</svg>
<div class="a" style="left:929px;top:95px;width:8px;height:14px;background:#333;border-radius:3px 0 0 3px"></div>
<svg class="a" style="left:929px;top:95px" width="7" height="14" viewBox="0 0 7 14"><path d="M5 4.5 L2.5 7 L5 9.5" fill="none" stroke="#c8c8c8" stroke-width="1"/></svg>

<!-- nav buttons -->
<div class="nb" style="left:906px;top:148.7px"></div>
<div class="nb" style="left:906px;top:172px"></div>
<div class="nb" style="left:906px;top:196px"></div>
<div class="nb" style="left:906px;top:220px"></div>
<svg class="a" style="left:906px;top:148px" width="24" height="96" viewBox="906 148 24 96">
  <circle cx="919" cy="158.5" r="4.5" fill="none" stroke="#e8e8e8" stroke-width="1.4"/>
  <path d="M916 161.5 L911 166" stroke="#e8e8e8" stroke-width="2"/>
  <path d="M919 156 V161 M916.5 158.5 H921.5" stroke="#e8e8e8" stroke-width="1.1"/>
  <path d="M912 184 C912 180 913 178 914 178 L914 183 L914.5 176.5 C914.5 175 916.5 175 916.5 176.5 L916.5 182 L917 175.5 C917 174 919 174 919 175.5 L919 182 L919.5 176.5 C919.5 175 921.5 175 921.5 176.5 L921.5 183.5 L922.5 181 C923.5 179.5 925 180 924.5 181.5 L922 188 C921 190 919.5 191 917.5 191 C914 191 912 188.5 912 184 Z" fill="#e8e8e8"/>
  <circle cx="914" cy="203" r="2.3" fill="none" stroke="#e8e8e8" stroke-width="1.2"/>
  <circle cx="920" cy="202.5" r="2.8" fill="none" stroke="#e8e8e8" stroke-width="1.2"/>
  <rect x="913" y="206.5" width="8" height="5" fill="#e8e8e8"/>
  <path d="M922 209 L925 207 V212 Z" fill="none" stroke="#e8e8e8" stroke-width="1"/>
  <path d="M911.5 225.5 H922.5 V236.5 H911.5 Z M915.2 225.5 V236.5 M918.8 225.5 V236.5 M911.5 229.2 H922.5 M911.5 232.8 H922.5" fill="none" stroke="#e0e0e0" stroke-width="1.1"/>
</svg>

<div class="a" style="left:934.6px;top:38px;width:1.4px;height:606px;background:#232323"></div>
</body></html>
